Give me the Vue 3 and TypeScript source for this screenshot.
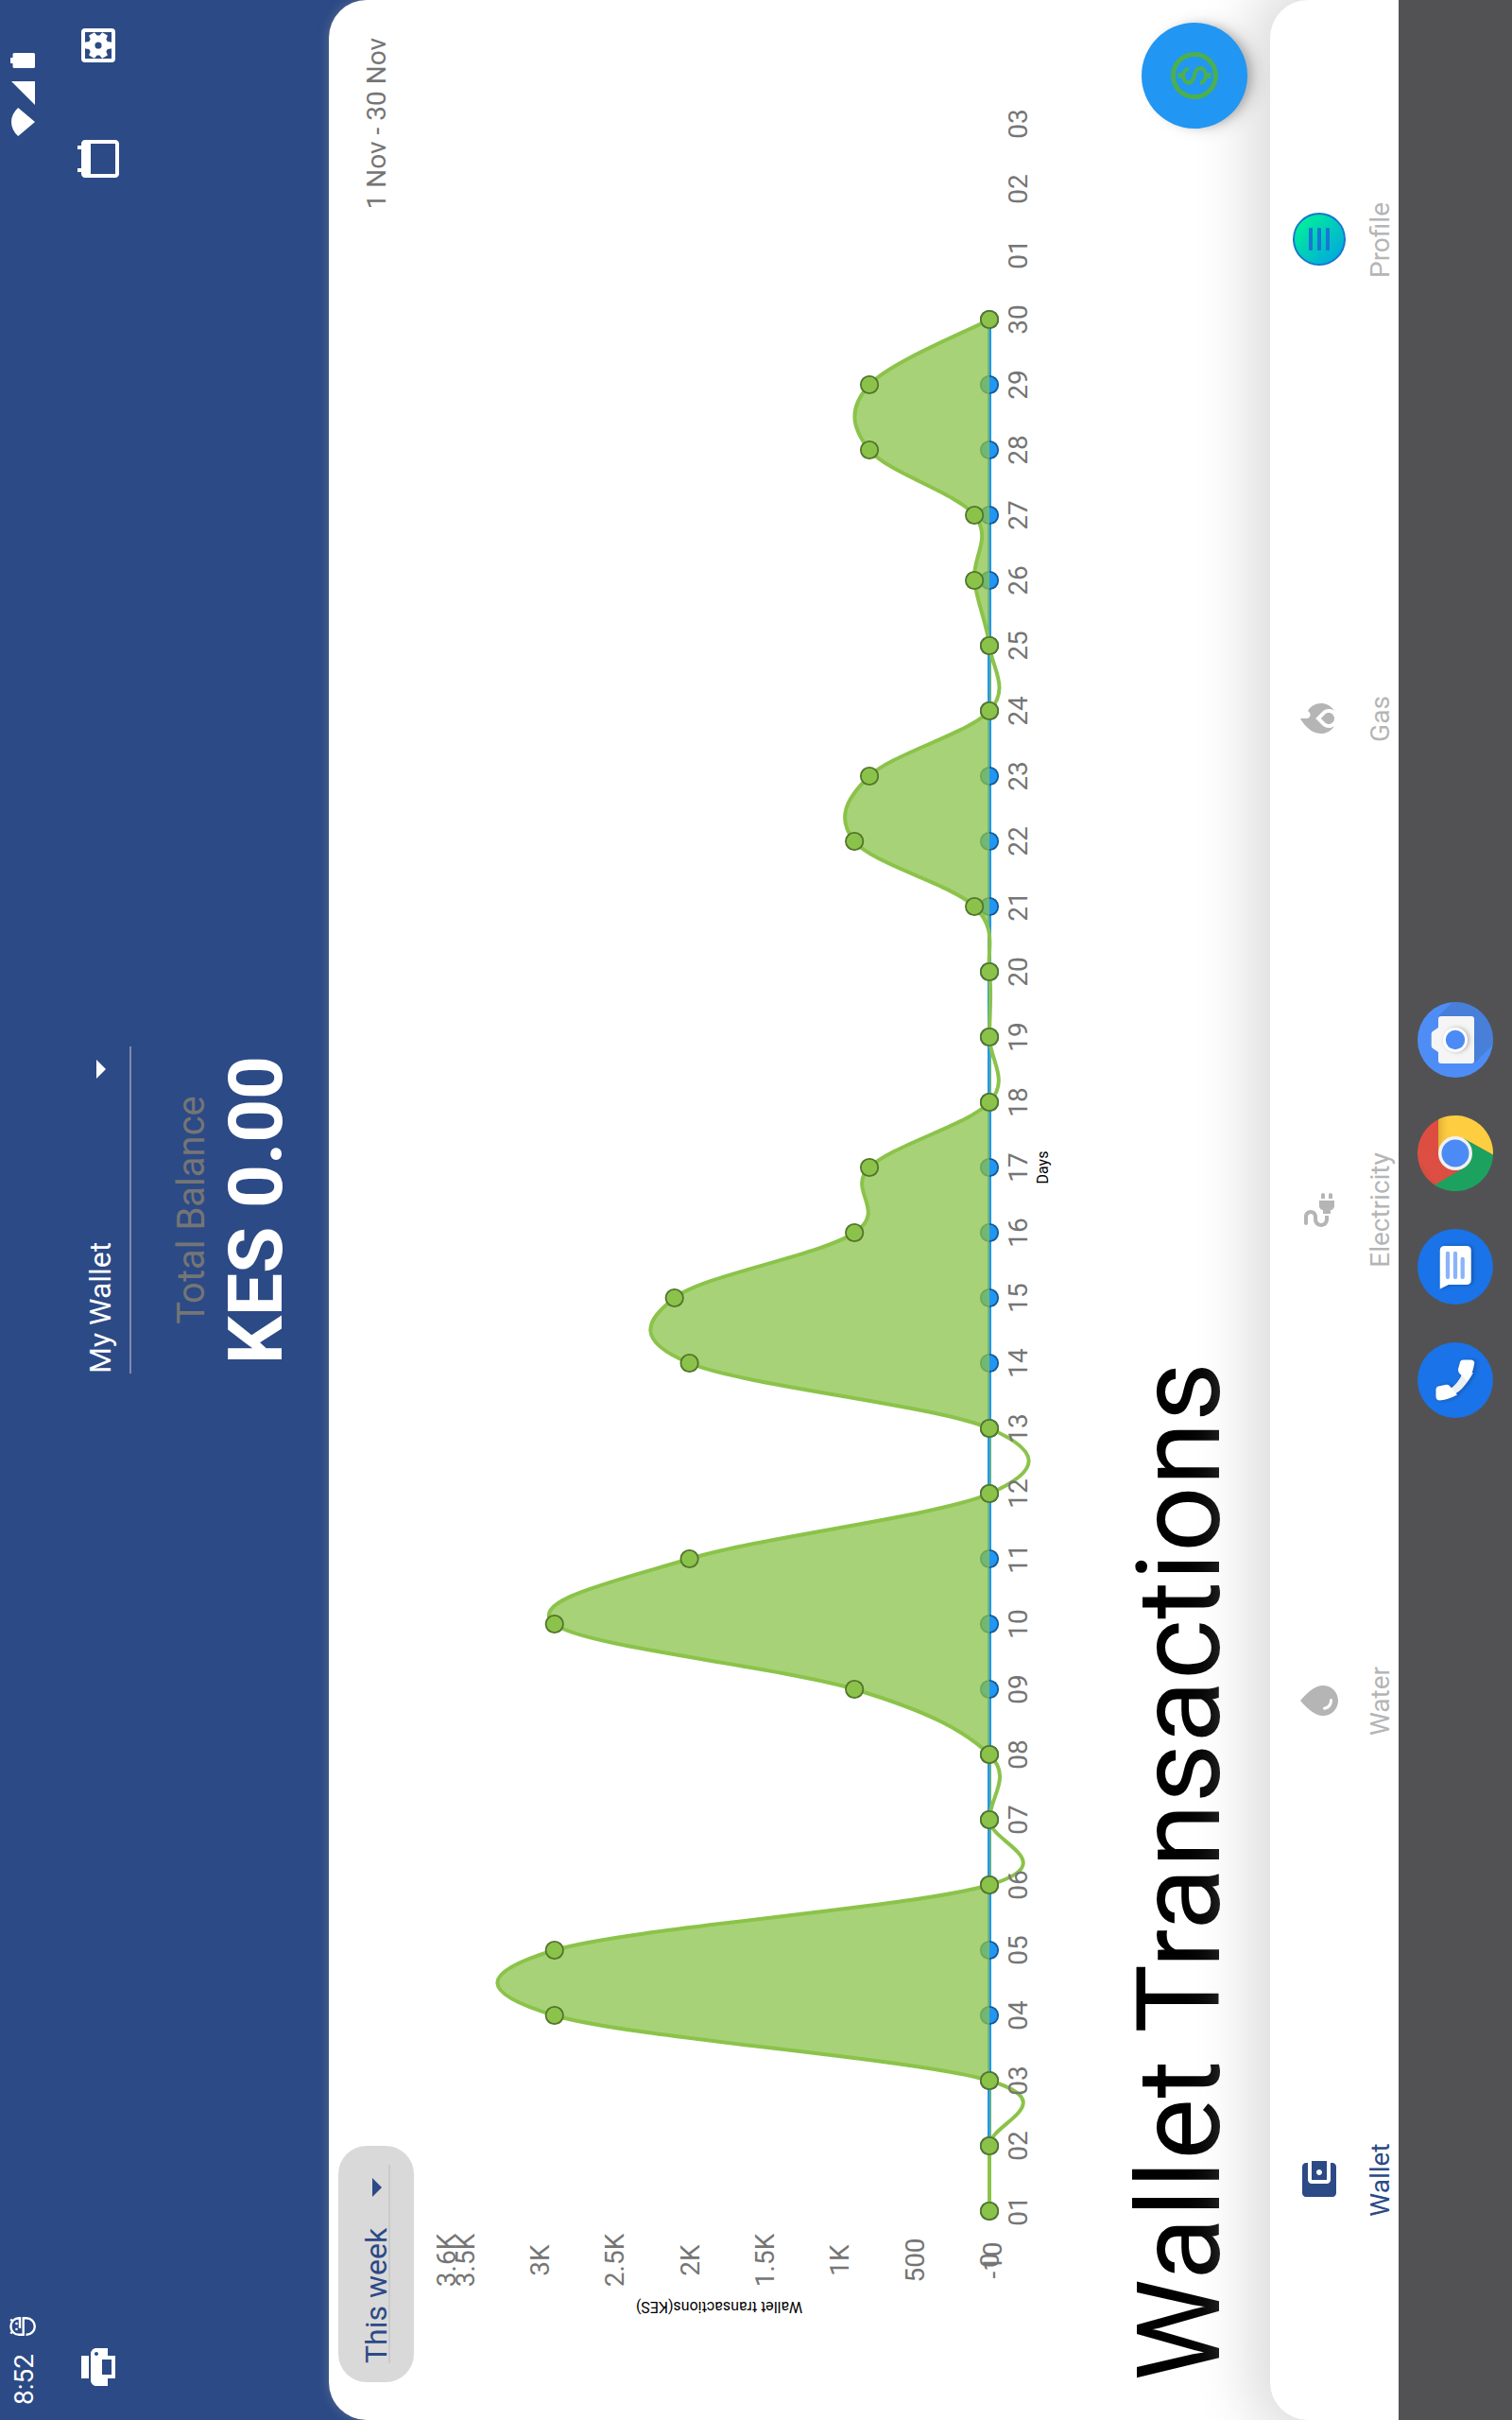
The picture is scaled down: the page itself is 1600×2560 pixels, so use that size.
<script setup lang="ts">
interface Point { x: number; y: number }
interface NavItem { label: string; path?: string; active?: boolean }

const ORIGIN_X = 221
const ZERO_Y = 1047
const DAY_STEP = 69
const PX_PER_UNIT = 0.1587
const SMOOTHNESS = 0.35

const values: number[] = [
  0, 0, 0, 2900, 2900, 0, 0, 0, 900, 2900, 2000, 0, 0, 2000, 2100,
  900, 800, 0, 0, 0, 100, 900, 800, 0, 0, 100, 100, 800, 800, 0,
]

const points: Point[] = values.map((v, i) => ({ x: ORIGIN_X + i * DAY_STEP, y: ZERO_Y - v * PX_PER_UNIT }))

function smoothPath(pts: Point[]): string {
  let d = `M${pts[0].x} ${pts[0].y}`
  let tx = 0
  let ty = 0
  for (let i = 1; i < pts.length; i++) {
    const prev = pts[i - 1]
    const cur = pts[i]
    const next = pts[i + 1] ?? cur
    const c1x = prev.x + tx
    const c1y = prev.y + ty
    tx = ((next.x - prev.x) / 2) * SMOOTHNESS
    ty = ((next.y - prev.y) / 2) * SMOOTHNESS
    d += ` C${c1x} ${c1y} ${cur.x - tx} ${cur.y - ty} ${cur.x} ${cur.y}`
  }
  return d
}

const linePath = smoothPath(points)
const lastX = points[points.length - 1].x
const areaPath = `${linePath} L${lastX} ${ZERO_Y} L${ORIGIN_X} ${ZERO_Y} Z`

const dips: [number, number][] = [[2, 3], [6, 7], [7, 8], [12, 13], [18, 19], [24, 25]]

const dayLabels: string[] = Array.from({ length: 33 }, (_, i) => String(i < 30 ? i + 1 : i - 29).padStart(2, '0'))

const yLabels: { text: string; y: number }[] = [
  { text: '3.6K', y: 472 },
  { text: '3.5K', y: 491.5 },
  { text: '3K', y: 571 },
  { text: '2.5K', y: 650 },
  { text: '2K', y: 730 },
  { text: '1.5K', y: 809 },
  { text: '1K', y: 888 },
  { text: '500', y: 968 },
  { text: '0', y: 1047 },
  { text: '-10', y: 1049.5 },
]

const navItems: NavItem[] = [
  {
    label: 'Wallet', active: true,
    path: 'M21 18v1c0 1.1-.9 2-2 2H5c-1.11 0-2-.9-2-2V5c0-1.1.89-2 2-2h14c1.1 0 2 .9 2 2v1h-9c-1.11 0-2 .9-2 2v8c0 1.1.89 2 2 2h9zm-9-2h10V8H12v8zm4-2.5c-.83 0-1.5-.67-1.5-1.5s.67-1.5 1.5-1.5 1.5.67 1.5 1.5-.67 1.5-1.5 1.5z',
  },
  {
    label: 'Water',
    path: 'M12 2c-5.33 4.55-8 8.48-8 11.8 0 4.98 3.8 8.2 8 8.2s8-3.22 8-8.2c0-3.32-2.67-7.25-8-11.8zM7.83 14c.37 0 .67.26.74.62.41 2.22 2.28 2.98 3.64 2.87.43-.02.79.32.79.75 0 .4-.32.73-.72.75-2.13.13-4.62-1.09-5.19-4.12-.08-.45.28-.87.74-.87z',
  },
  {
    label: 'Electricity',
    path: 'M21 14c0-.55-.45-1-1-1h-2v2h2c.55 0 1-.45 1-1zM20 17h-2v2h2c.55 0 1-.45 1-1s-.45-1-1-1zM12 14h-2v4h2c0 1.1.9 2 2 2h3v-8h-3c-1.1 0-2 .9-2 2zM5 13c0-1.1.9-2 2-2h1.5c1.93 0 3.5-1.57 3.5-3.5S10.43 4 8.5 4H5c-.55 0-1 .45-1 1s.45 1 1 1h3.5c.83 0 1.5.67 1.5 1.5S9.33 9 8.5 9H7c-2.21 0-4 1.79-4 4s1.79 4 4 4h2v-2H7c-1.1 0-2-.9-2-2z',
  },
  {
    label: 'Gas',
    path: 'M16 6l-.44.55C14.38 8.02 12 7.19 12 5.3V2S4 6 4 13c0 2.92 1.56 5.47 3.89 6.86-.56-.79-.89-1.76-.89-2.8 0-1.32.52-2.56 1.47-3.5L12 10.1l3.53 3.47c.95.93 1.47 2.17 1.47 3.5 0 1.02-.31 1.96-.85 2.75 1.89-1.15 3.29-3.06 3.71-5.3.66-3.55-1.07-6.9-3.86-8.52zM12 12.9l-2.13 2.09c-.56.56-.87 1.29-.87 2.07C9 18.68 10.35 20 12 20s3-1.32 3-2.94c0-.78-.31-1.52-.87-2.07L12 12.9z',
  },
  { label: 'Profile' },
]
</script>

<template>
  <div class="frame">
    <div class="device">
      <header class="header">
        <div class="status">
          <span class="clock">8:52</span>
          <svg class="debug" viewBox="0 0 20 28" width="20" height="28">
            <g fill="none" stroke="#fff" stroke-width="2.4">
              <path d="M8 11H18.800V10A8.800 8.600 0 0 0 1.200 10V14.700H18.800V18A8.800 8.800 0 0 1 1.200 18V17.500M2.500 1.200L5 3.800M17.500 1.200L15 3.800" />
            </g>
            <circle cx="7" cy="7.500" r="1.300" fill="#fff" />
            <circle cx="13" cy="7.500" r="1.300" fill="#fff" />
          </svg>
          <span class="grow"></span>
          <svg class="wifi" viewBox="0 0 30 25" width="30" height="25"><path d="M15 25L0 7.200Q6.500 0 15 0T30 7.200Z" fill="#fff" /></svg>
          <svg class="signal" viewBox="0 0 25 25" width="25" height="25"><path d="M25 0V25H0Z" fill="#fff" /></svg>
          <svg class="battery" viewBox="0 0 16 26" width="16" height="26"><path d="M5 0h6v2.500h3.500q1.500 0 1.500 1.500v20.500q0 1.500-1.500 1.500h-13Q0 26 0 24.500V4q0-1.500 1.500-1.500H5Z" fill="#fff" /></svg>
        </div>
        <div class="appbar">
          <svg class="icon" viewBox="0 0 24 24"><path d="M19 8H5c-1.660 0-3 1.340-3 3v6h4v4h12v-4h4v-6c0-1.660-1.340-3-3-3zm-3 11H8v-5h8v5zm3-7c-.55 0-1-.45-1-1s.45-1 1-1 1 .45 1 1-.45 1-1 1zm-1-9H6v4h12V3z" /></svg>
          <div class="actions">
            <svg class="icon" viewBox="0 0 24 24"><path d="M20 3h-1V1h-2v2H7V1H5v2H4c-1.100 0-2 .9-2 2v16c0 1.100.9 2 2 2h16c1.100 0 2-.9 2-2V5c0-1.100-.9-2-2-2zm0 18H4V8h16v13z" /></svg>
            <svg class="icon" viewBox="0 0 24 24">
              <path fill-rule="evenodd" d="M5 3H19a2 2 0 0 1 2 2V19a2 2 0 0 1-2 2H5a2 2 0 0 1-2-2V5a2 2 0 0 1 2-2zM5 5V19H19V5z" />
              <path fill-rule="evenodd" d="M17.250 12c0-.23-.02-.46-.05-.68l1.480-1.160c.13-.11.17-.3.08-.45l-1.400-2.420c-.09-.15-.27-.21-.43-.15l-1.740.7c-.36-.28-.76-.51-1.180-.69l-.26-1.850c-.03-.17-.18-.3-.35-.3h-2.800c-.17 0-.32.13-.35.3L9.990 7.150c-.42.18-.82.41-1.180.69l-1.740-.7c-.16-.06-.34 0-.43.15l-1.400 2.420c-.09.15-.05.34.08.45l1.480 1.160c-.03.22-.05.45-.05.68s.02.46.05.68l-1.480 1.160c-.13.11-.17.3-.08.45l1.400 2.420c.09.15.27.21.43.15l1.740-.7c.36.28.76.51 1.180.69l.26 1.850c.03.17.18.3.35.3h2.800c.17 0 .32-.13.35-.3l.26-1.850c.42-.18.82-.41 1.180-.69l1.740.7c.16.06.34 0 .43-.15l1.400-2.420c.09-.15.05-.34-.08-.45l-1.480-1.160c.03-.22.05-.45.05-.68zM12 10.200a1.800 1.800 0 1 0 0 3.600a1.800 1.800 0 0 0 0-3.600z" />
            </svg>
          </div>
        </div>
        <div class="account">
          <div class="select wallet-select">
            <span>My Wallet</span>
            <svg class="icon" viewBox="0 0 24 24"><path d="M7 10l5 5 5-5z" /></svg>
          </div>
          <div class="balance-label">Total Balance</div>
          <div class="balance">KES 0.00</div>
        </div>
      </header>

      <main class="card">
        <div class="toolbar">
          <div class="pill">
            <div class="select period-select">
              <span>This week</span>
              <svg class="icon" viewBox="0 0 24 24"><path d="M7 10l5 5 5-5z" /></svg>
            </div>
          </div>
          <span class="range">1 Nov - 30 Nov</span>
        </div>

        <svg class="chart" viewBox="0 438 2560 700" width="2560" height="700">
          <defs>
            <clipPath id="above-zero"><rect x="200" y="438" width="2200" :height="ZERO_Y - 438" /></clipPath>
          </defs>
          <line :x1="ORIGIN_X" :x2="lastX" :y1="ZERO_Y" :y2="ZERO_Y" stroke="#2196f3" stroke-width="4" />
          <circle v-for="(p, i) in points" :key="`b${i}`" :cx="p.x" :cy="ZERO_Y" r="9.2" class="dot-blue" />
          <path :d="areaPath" fill="#8bc34a" fill-opacity=".75" clip-path="url(#above-zero)" />
          <rect v-for="(r, i) in dips" :key="`d${i}`" :x="points[r[0] - 1].x" :y="ZERO_Y" :width="(r[1] - r[0]) * DAY_STEP" height="2" fill="#8bc34a" fill-opacity=".6" />
          <path :d="linePath" fill="none" stroke="#8bc34a" stroke-width="4" />
          <circle v-for="(p, i) in points" :key="`g${i}`" :cx="p.x" :cy="p.y" r="9.2" class="dot-green" />
          <g class="tick">
            <text v-for="(d, i) in dayLabels" :key="`x${i}`" :x="ORIGIN_X + i * DAY_STEP" y="1087">{{ d }}</text>
            <text v-for="(l, i) in yLabels" :key="`y${i}`" x="169" :y="l.y + 10">{{ l.text }}</text>
          </g>
          <text class="axis" x="1325" y="1109">Days</text>
          <text class="axis" transform="translate(125 761) rotate(-90)">Wallet transactions(KES)</text>
        </svg>

        <h1 class="title">Wallet Transactions</h1>

        <nav class="nav">
          <div v-for="item in navItems" :key="item.label" class="nav-item" :class="{ active: item.active }">
            <span class="nav-icon">
              <svg v-if="item.path" class="icon" viewBox="0 0 24 24"><path :d="item.path" /></svg>
              <span v-else class="avatar"><i></i><i></i><i></i></span>
            </span>
            <span>{{ item.label }}</span>
          </div>
        </nav>

        <button class="fab" aria-label="Pay">
          <svg viewBox="0 0 24 24" width="60" height="60"><path fill="#4caf50" d="M12 2C6.480 2 2 6.480 2 12s4.480 10 10 10 10-4.480 10-10S17.520 2 12 2zm0 18c-4.410 0-8-3.590-8-8s3.590-8 8-8 8 3.590 8 8-3.590 8-8 8zm.31-8.860c-1.770-.45-2.340-.94-2.340-1.670 0-.84.79-1.430 2.100-1.430 1.380 0 1.900.66 1.940 1.640h1.710c-.05-1.340-.87-2.570-2.490-2.970V5H10.900v1.690c-1.510.32-2.720 1.300-2.720 2.810 0 1.790 1.490 2.690 3.660 3.210 1.950.46 2.340 1.150 2.340 1.870 0 .53-.39 1.390-2.100 1.390-1.600 0-2.230-.72-2.320-1.640H8.040c.1 1.700 1.360 2.660 2.860 2.970V19h2.340v-1.670c1.520-.29 2.720-1.160 2.730-2.770-.01-2.200-1.900-2.960-3.660-3.420z" /></svg>
        </button>
      </main>

      <footer class="dock">
        <svg class="app" viewBox="0 0 80 80">
          <circle cx="40" cy="40" r="40" fill="#1a73e8" />
          <g class="soft">
            <path d="M20 29Q25 41 31 47Q40 55 48 59L46 47Q37 43 31 35Z" fill="#eceff1" />
            <path d="M23 19.500H30Q33 19.500 33.500 22L35.300 30.500Q35.500 32.500 34 34L24.500 42Q19 32 18.600 23.500Q18.700 19.500 23 19.500Z" fill="#fff" />
            <path d="M60.500 57V50Q60.500 46.500 58 46L50.500 44Q48 43.500 46 45.500L38 54Q47 60 57 61.300Q60.500 61 60.500 57Z" fill="#fff" transform="translate(1 -1)" />
          </g>
        </svg>
        <svg class="app" viewBox="0 0 80 80">
          <circle cx="40" cy="40" r="40" fill="#1a73e8" />
          <path class="soft" d="M16.500 23.700H57Q62 23.700 62 28.500V52Q62 56.700 57 56.700H26Q21 56.700 21 52V33Z" fill="#fff" />
          <g stroke="#8ab4f8" stroke-width="4.300" stroke-linecap="round"><path d="M29 32H54M29 40H54M29 47.700H48" /></g>
        </svg>
        <svg class="app" viewBox="0 0 80 80">
          <defs>
            <linearGradient id="gr" x1="0" y1="0" x2="1" y2="1"><stop offset="0" stop-color="#d24335" /><stop offset=".25" stop-color="#dd4f43" /><stop offset="1" stop-color="#dc4a3d" /></linearGradient>
            <linearGradient id="gs" x1="0" y1="0" x2="0" y2="1"><stop offset="0" stop-color="#b98a20" stop-opacity=".45" /><stop offset="1" stop-color="#ffcd40" stop-opacity="0" /></linearGradient>
          </defs>
          <path d="M5.360 20A40 40 0 0 1 75.700 22H40L24.400 49Z" fill="url(#gr)" />
          <path d="M75.700 22A40 40 0 0 1 38.200 80L55.600 49L40 22Z" fill="#ffcd40" />
          <path d="M75.700 22L78.500 30L56 36L40 22Z" fill="url(#gs)" />
          <path d="M38.200 80A40 40 0 0 1 6.500 18L24.400 49H55.600Z" fill="#1da15f" />
          <circle cx="40" cy="40" r="18" fill="#f1f1f1" />
          <circle cx="40" cy="40" r="14.500" fill="#4c8bf5" />
        </svg>
        <svg class="app" viewBox="0 0 80 80">
          <defs>
            <clipPath id="cam"><circle cx="40" cy="40" r="40" /></clipPath>
          </defs>
          <circle cx="40" cy="40" r="40" fill="#4f8df6" />
          <path d="M65 22L105 62L55 100L15 60Z" fill="#4377c6" fill-opacity=".6" clip-path="url(#cam)" />
          <path d="M27 22L31.500 15.500Q32.500 14.700 34 14.700H46Q47.500 14.700 48.500 15.500L53 22H62Q65 22 65 25V57Q65 60 62 60H18Q15 60 15 57V25Q15 22 18 22Z" fill="#f5f5f5" />
          <circle class="soft" cx="40" cy="40" r="13" fill="#fff" />
          <circle cx="40" cy="40" r="10.200" fill="#4c8bf5" />
        </svg>
      </footer>
    </div>
  </div>
</template>

<style>
html,
body {
  margin: 0;
  overflow: hidden;
}
</style>

<style scoped>
.frame {
  width: 1600px;
  height: 2560px;
  overflow: hidden;
}

/* Landscape tablet held on its side */
.device {
  width: 2560px;
  height: 1600px;
  display: flex;
  flex-direction: column;
  transform-origin: 0 0;
  transform: translateY(2560px) rotate(-90deg);
  background: #2c4a86;
  font-family: Roboto, 'Liberation Sans', sans-serif;
  color: #fff;
}

.header {
  height: 348px;
  flex: none;
}

.icon {
  width: 48px;
  height: 48px;
  fill: currentColor;
  display: block;
}

.status {
  height: 48px;
  display: flex;
  align-items: flex-start;
  padding: 0 56px 0 16px;
}

.status svg {
  display: block;
}

.clock {
  font-size: 28px;
  line-height: 51px;
  width: 73px;
}

.debug {
  margin-top: 10px;
}

.grow {
  flex: 1;
}

.wifi {
  margin: 11.500px 3.500px 0 0;
}

.signal {
  margin: 12px 14px 0 0;
}

.battery {
  margin-top: 11px;
}

.appbar {
  height: 48px;
  margin-top: 32px;
  padding: 0 24px 0 32px;
  display: flex;
  justify-content: space-between;
}

.actions {
  display: flex;
  gap: 72px;
}

.account {
  margin-top: -48px;
  display: flex;
  flex-direction: column;
  align-items: center;
}

.select {
  display: flex;
  justify-content: space-between;
  align-items: center;
  box-sizing: border-box;
  font-size: 32px;
}

.wallet-select {
  width: 346px;
  height: 59px;
  padding-bottom: 5px;
  border-bottom: 2px solid #7f8bae;
}

.balance-label {
  margin-top: 40px;
  font-size: 40px;
  line-height: 48px;
  color: #757575;
}

.balance {
  margin-top: -3px;
  font-size: 80px;
  line-height: 94px;
  font-weight: 700;
}

.card {
  position: relative;
  height: 1132px;
  flex: none;
  display: flex;
  flex-direction: column;
  background: #fff;
  border-radius: 40px 40px 0 0;
  box-shadow: 0 0 12px rgba(158, 158, 158, .4);
}

.toolbar {
  height: 90px;
  box-sizing: border-box;
  padding: 10px 40px 0;
  display: flex;
  justify-content: space-between;
}

.pill {
  width: 250px;
  height: 80px;
  box-sizing: border-box;
  padding: 15px 20px 0;
  border-radius: 30px;
  background: #d9d9d9;
}

.period-select {
  height: 40px;
  padding-top: 12px;
  border-bottom: 2px solid #cacaca;
  color: #2c4a86;
}

.range {
  line-height: 82px;
  font-size: 28px;
  color: #757575;
}

.chart {
  display: block;
  flex: none;
}

.tick {
  font-size: 28px;
  fill: #757575;
  text-anchor: middle;
}

.axis {
  font-size: 16px;
  fill: #000;
  text-anchor: middle;
}

.dot-blue {
  fill: #2196f3;
  stroke: #145a92;
  stroke-width: 1.800px;
}

.dot-green {
  fill: #8bc34a;
  stroke: #53752c;
  stroke-width: 1.800px;
}

.title {
  margin: 39px 0 0 41px;
  height: 167px;
  line-height: 144px;
  font-size: 122px;
  letter-spacing: .55px;
  font-weight: 400;
  color: #000;
}

.nav {
  position: relative;
  height: 136px;
  flex: none;
  display: grid;
  grid-template-columns: 508px 505px 534px 505px 508px;
  background: #fff;
  border-radius: 40px 40px 0 0;
  box-shadow: 0 0 60px 22px #dcdcdc;
  clip-path: inset(-120px 0 0 0);
}

.nav-item {
  display: flex;
  flex-direction: column;
  align-items: center;
  padding-top: 24px;
  font-size: 28px;
  line-height: 33px;
  color: #b5b5b5;
}

.nav-item.active {
  color: #2c4a86;
}

.nav-icon {
  height: 76px;
  padding-top: 4px;
  box-sizing: border-box;
}

.avatar {
  margin: -4px 0 0 1px;
  width: 56px;
  height: 56px;
  box-sizing: border-box;
  border: 2px solid #1976d2;
  border-radius: 50%;
  background: linear-gradient(to bottom left, #00f09a 10%, #00a5e0 95%);
  display: flex;
  flex-direction: column;
  align-items: center;
  justify-content: center;
  gap: 5px;
}

.avatar i {
  width: 24px;
  height: 4px;
  border-radius: 1px;
  background: #1976d2;
}

.fab {
  position: absolute;
  right: 24px;
  top: 860px;
  width: 112px;
  height: 112px;
  padding: 0;
  border: 0;
  border-radius: 50%;
  background: #2196f3;
  display: flex;
  align-items: center;
  justify-content: center;
  box-shadow: 0 6px 10px -2px rgba(0, 0, 0, .2), 0 10px 18px rgba(0, 0, 0, .12);
}

.dock {
  height: 120px;
  flex: none;
  display: flex;
  justify-content: center;
  align-items: center;
  gap: 40px;
  background: #525254;
  position: relative;
}

.app {
  width: 80px;
  height: 80px;
}

.soft {
  filter: drop-shadow(0 2px 2px rgba(0, 0, 0, .25));
}
</style>
